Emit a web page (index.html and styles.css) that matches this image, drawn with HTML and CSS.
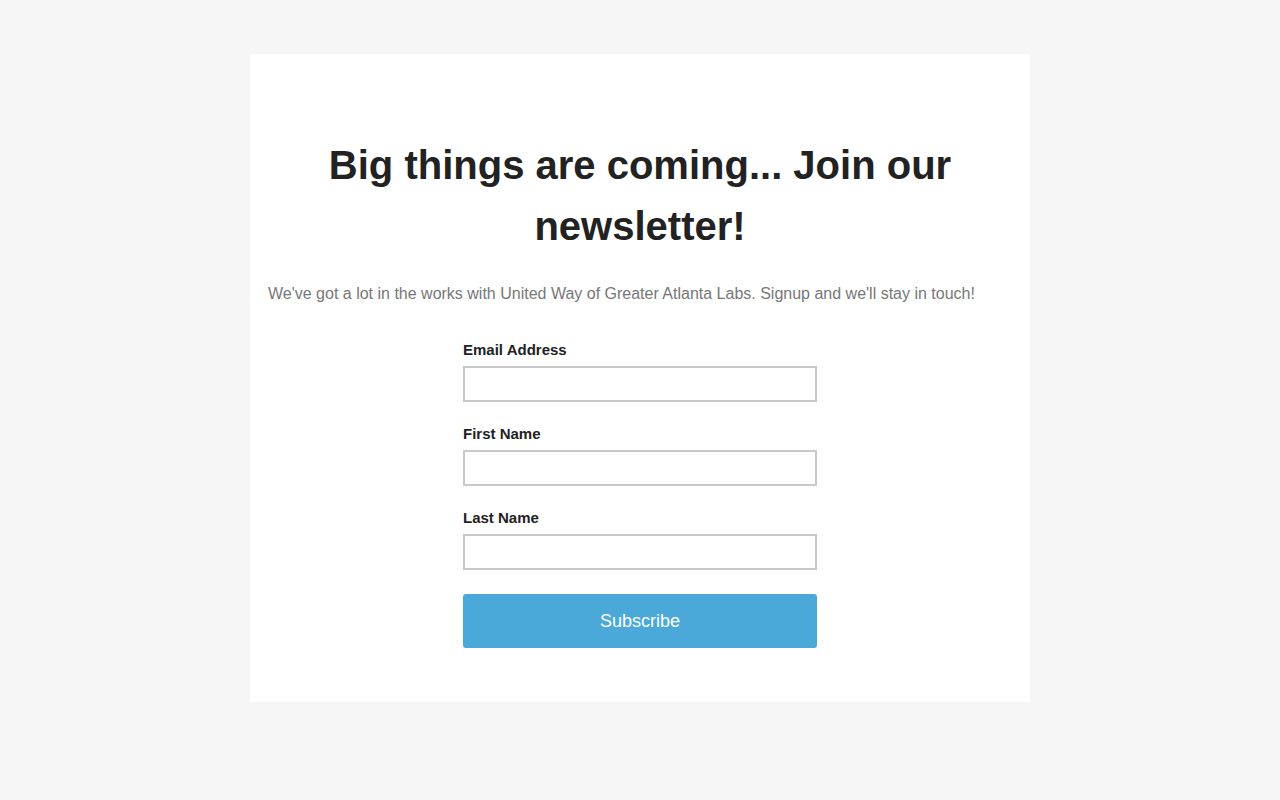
FILE: index.html
```html
<!DOCTYPE html>
<html lang="en">
<head>
<meta charset="utf-8">
<title>Newsletter</title>
<link rel="stylesheet" href="styles.css">
</head>
<body>
<main class="card">
  <h1 class="title">Big things are coming... Join our newsletter!</h1>
  <p class="intro">We've got a lot in the works with United Way of Greater Atlanta Labs. Signup and we'll stay in touch!</p>
  <form class="form">
    <label class="field">
      <span class="label">Email Address</span>
      <input class="input" type="email">
    </label>
    <label class="field">
      <span class="label">First Name</span>
      <input class="input" type="text">
    </label>
    <label class="field">
      <span class="label">Last Name</span>
      <input class="input" type="text">
    </label>
    <button class="button" type="button">Subscribe</button>
  </form>
</main>
</body>
</html>
```
FILE: styles.css
```css
html, body {
  margin: 0;
  padding: 0;
}
body {
  background: #f6f6f6;
  font-family: "Liberation Sans", Arial, sans-serif;
}
.card {
  box-sizing: border-box;
  width: 780px;
  margin: 54px auto 0;
  background: #fff;
  padding: 81px 18px 54px;
}
.title {
  margin: 0;
  font-size: 40px;
  line-height: 61px;
  font-weight: bold;
  color: #222;
  text-align: center;
  padding: 0 60px;
}
.intro {
  margin: 25px 0 0;
  font-size: 16px;
  line-height: 24px;
  color: #777;
}
.form {
  width: 354px;
  margin: 34px auto 0;
  display: flex;
  flex-direction: column;
}
.field {
  display: flex;
  flex-direction: column;
  gap: 6px;
  margin-bottom: 22px;
}
.label {
  font-size: 15px;
  line-height: 20px;
  font-weight: bold;
  color: #222;
}
.input {
  box-sizing: border-box;
  width: 100%;
  height: 36px;
  margin: 0;
  border: 2px solid #c9c9c9;
  background: #fff;
  padding: 0 8px;
  font: inherit;
}
.button {
  margin-top: 2px;
  height: 54px;
  width: 100%;
  border: 0;
  border-radius: 3px;
  background: #4aa9d8;
  color: #fff;
  font-family: "Liberation Sans", Arial, sans-serif;
  font-size: 18px;
}
```
